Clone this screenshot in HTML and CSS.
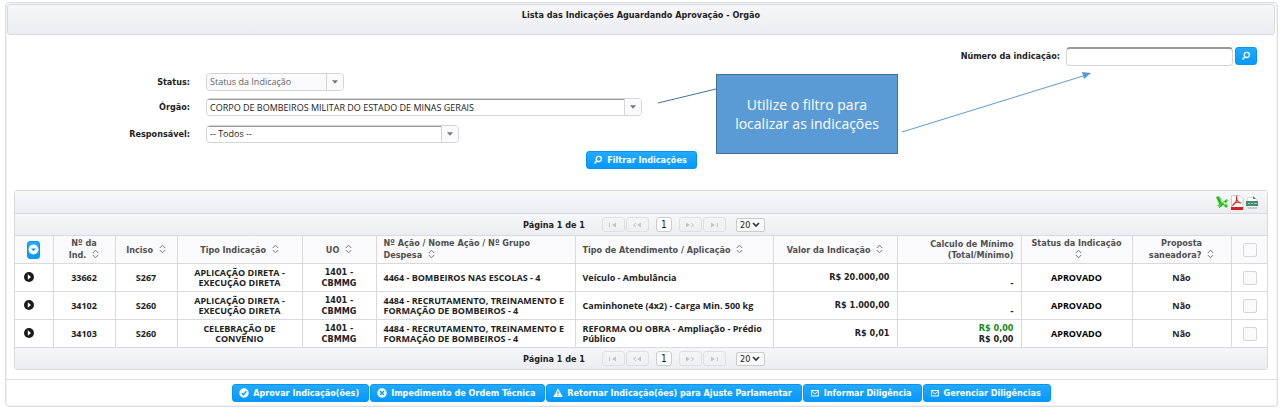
FILE: index.html
```html
<!DOCTYPE html>
<html lang="pt-BR">
<head>
<meta charset="utf-8">
<title>Lista das Indicações Aguardando Aprovação - Orgão</title>
<link rel="stylesheet" href="styles.css">
</head>
<body>
<svg class="sprite" aria-hidden="true">
  <symbol id="i-sort" viewBox="0 0 7 10"><path d="M.8 4 3.500 1.200 6.200 4M.8 6 3.500 8.800 6.200 6" fill="none" stroke="#777"/></symbol>
  <symbol id="i-search" viewBox="0 0 10 10"><circle cx="5.800" cy="3.900" r="2.600" fill="none" stroke="#fff" stroke-width="1.300"/><path d="M4 5.800 1.500 8.500" stroke="#fff" stroke-width="1.600"/></symbol>
  <symbol id="i-down" viewBox="0 0 7 4"><path d="M0 0H7L3.500 4Z" fill="#777"/></symbol>
  <symbol id="i-first" viewBox="0 0 10 6"><path d="M1 1h1v4H1ZM8 .5v5L4 3Z" fill="#c4c4c6"/></symbol>
  <symbol id="i-prev" viewBox="0 0 10 6"><path d="M4 1 1.500 3 4 5" fill="none" stroke="#c4c4c6"/><path d="M9 .5v5L5 3Z" fill="#c4c4c6"/></symbol>
  <symbol id="i-next" viewBox="0 0 10 6"><path d="M6 1 8.500 3 6 5" fill="none" stroke="#c4c4c6"/><path d="M1 .5v5L5 3Z" fill="#c4c4c6"/></symbol>
  <symbol id="i-last" viewBox="0 0 10 6"><path d="M8 1h1v4H8ZM2 .5v5L6 3Z" fill="#c4c4c6"/></symbol>
  <symbol id="i-expand" viewBox="0 0 10 10"><circle cx="5" cy="5" r="5" fill="#1b1b1b"/><path d="M3.800 2.200 7 5 3.800 7.800Z" fill="#fff"/></symbol>
  <symbol id="i-check" viewBox="0 0 10 10"><circle cx="5" cy="5" r="4.700" fill="#fff"/><path d="M2.700 5.200 4.400 6.800 7.400 3.300" fill="none" stroke="#0a9bfa" stroke-width="1.400"/></symbol>
  <symbol id="i-cross" viewBox="0 0 10 10"><circle cx="5" cy="5" r="4.700" fill="#fff"/><path d="M3 3 7 7M7 3 3 7" stroke="#0a9bfa" stroke-width="1.400"/></symbol>
  <symbol id="i-alert" viewBox="0 0 10 10"><path d="M5 .5 9.800 9H.2Z" fill="#fff"/><path d="M5 3.300V6M5 6.900V8" stroke="#0a9bfa" stroke-width="1.200"/></symbol>
  <symbol id="i-mail" viewBox="0 0 10 10"><path d="M1.500 2.500h7v5.500h-7ZM1.500 3 5 6 8.500 3" fill="none" stroke="#fff"/></symbol>
</svg>

<main class="panel">
  <h1 class="panel-title">Lista das Indicações Aguardando Aprovação - Orgão</h1>

  <form class="filters">
    <div class="search">
      <label for="numero">Número da indicação:</label>
      <input id="numero" class="field" type="text">
      <button class="btn btn-icon" type="button" aria-label="Pesquisar"><svg class="ico"><use href="#i-search"/></svg></button>
    </div>
    <div class="grid">
      <label for="status">Status:</label>
      <div class="combo combo-s combo-off"><select id="status" disabled><option>Status da Indicação</option></select><span class="arrow"><svg><use href="#i-down"/></svg></span></div>
      <label for="orgao">Órgão:</label>
      <div class="combo combo-l"><select id="orgao"><option>CORPO DE BOMBEIROS MILITAR DO ESTADO DE MINAS GERAIS</option></select><span class="arrow"><svg><use href="#i-down"/></svg></span></div>
      <label for="resp">Responsável:</label>
      <div class="combo combo-m"><select id="resp"><option>-- Todos --</option></select><span class="arrow"><svg><use href="#i-down"/></svg></span></div>
    </div>
    <div class="submit"><button class="btn" type="button"><svg class="ico"><use href="#i-search"/></svg>Filtrar Indicações</button></div>
  </form>

  <section class="datatable">
    <div class="bar exports">
      <button type="button" aria-label="Exportar planilha"><svg viewBox="0 0 14 15"><path d="M1 2 4 1l2 3 1 4 2-2 3-2 1 2-2 2 2 3-2 2-3-3-2 2-4-1 2-2Z" fill="#3bd32c"/><path d="m2 2 4 7M4 13l7-7M8 8l4 4" stroke="#158c1b" stroke-width=".8"/><path d="m8 8 2-1 1 2-1 1Z" fill="#f3f4f6"/></svg></button>
      <button type="button" aria-label="Exportar PDF"><svg viewBox="0 0 14 15"><path d="M1.500.5H10L13 3.500V14H1.500Z" fill="#fff" stroke="#ccc"/><path d="M1 12h12v3H1Z" fill="#d71e1e"/><path d="M6.500 2c1 3-1 6-3.500 8C4 7.500 8 6.500 11 8 8.500 8 6 4.500 6.500 2Z" fill="none" stroke="#e32020" stroke-width="1.100"/></svg></button>
      <button type="button" aria-label="Exportar CSV"><svg viewBox="0 0 14 15"><path d="M2.500 2.500H9L12 5V13H2.500Z" fill="#fafafa" stroke="#ddd"/><path d="M8 1 11 4H8Z" fill="#777"/><path d="M1 6h12v5H1Z" fill="#458a73"/><path d="M3 8.500h2M6 8.500h2M9 8.500h3" stroke="#9fd0be"/><path d="M3 13h9" stroke="#aaa"/></svg></button>
    </div>
    <nav class="bar pager" aria-label="Paginação superior">
      <span class="pages">Página 1 de 1</span>
      <button type="button" disabled aria-label="Primeira"><svg><use href="#i-first"/></svg></button>
      <button type="button" disabled aria-label="Anterior"><svg><use href="#i-prev"/></svg></button>
      <button type="button" class="current">1</button>
      <button type="button" disabled aria-label="Próxima"><svg><use href="#i-next"/></svg></button>
      <button type="button" disabled aria-label="Última"><svg><use href="#i-last"/></svg></button>
      <span class="rpp"><select aria-label="Linhas por página"><option>20</option></select><svg viewBox="0 0 8 5"><path d="m1 1 3 3 3-3" fill="none" stroke="#333" stroke-width="1.700"/></svg></span>
    </nav>
    <table>
      <colgroup><col class="c38"><col class="c62"><col class="c62"><col class="c125"><col class="c74"><col class="c199"><col class="c198"><col class="c124"><col class="c124"><col class="c111"><col class="c99"><col class="c37"></colgroup>
      <thead>
        <tr>
          <th><button class="btn toggle" type="button" aria-label="Expandir todos"><svg viewBox="0 0 10 10"><circle cx="5" cy="5" r="4.500" fill="#fff"/><path d="M2.800 4H7.200L5 6.500Z" fill="#0a9bfa"/></svg></button></th>
          <th>Nº da<br>Ind. <svg class="sort"><use href="#i-sort"/></svg></th>
          <th>Inciso <svg class="sort"><use href="#i-sort"/></svg></th>
          <th>Tipo Indicação <svg class="sort"><use href="#i-sort"/></svg></th>
          <th>UO <svg class="sort"><use href="#i-sort"/></svg></th>
          <th class="left">Nº Ação / Nome Ação / Nº Grupo<br>Despesa <svg class="sort"><use href="#i-sort"/></svg></th>
          <th class="left">Tipo de Atendimento / Aplicação <svg class="sort"><use href="#i-sort"/></svg></th>
          <th>Valor da Indicação <svg class="sort"><use href="#i-sort"/></svg></th>
          <th class="right">Calculo de Mínimo<br>(Total/Mínimo)</th>
          <th>Status da Indicação<br><svg class="sort"><use href="#i-sort"/></svg></th>
          <th>Proposta<br>saneadora? <svg class="sort"><use href="#i-sort"/></svg></th>
          <th><input type="checkbox" aria-label="Selecionar todos"></th>
        </tr>
      </thead>
      <tbody>
        <tr>
          <td class="left"><button class="expand" type="button" aria-label="Expandir"><svg><use href="#i-expand"/></svg></button></td>
          <td>33662</td><td>S267</td><td>APLICAÇÃO DIRETA -<br>EXECUÇÃO DIRETA</td><td class="big">1401 -<br>CBMMG</td>
          <td class="left">4464 - BOMBEIROS NAS ESCOLAS - 4</td><td class="left">Veículo - Ambulância</td>
          <td class="right big">R$ 20.000,00</td><td class="right big low">-</td><td class="black">APROVADO</td><td>Não</td>
          <td><input type="checkbox" aria-label="Selecionar 33662"></td>
        </tr>
        <tr>
          <td class="left"><button class="expand" type="button" aria-label="Expandir"><svg><use href="#i-expand"/></svg></button></td>
          <td>34102</td><td>S260</td><td>APLICAÇÃO DIRETA -<br>EXECUÇÃO DIRETA</td><td class="big">1401 -<br>CBMMG</td>
          <td class="left">4484 - RECRUTAMENTO, TREINAMENTO E<br>FORMAÇÃO DE BOMBEIROS - 4</td><td class="left">Caminhonete (4x2) - Carga Min. 500 kg</td>
          <td class="right big">R$ 1.000,00</td><td class="right big low">-</td><td class="black">APROVADO</td><td>Não</td>
          <td><input type="checkbox" aria-label="Selecionar 34102"></td>
        </tr>
        <tr>
          <td class="left"><button class="expand" type="button" aria-label="Expandir"><svg><use href="#i-expand"/></svg></button></td>
          <td>34103</td><td>S260</td><td>CELEBRAÇÃO DE<br>CONVÊNIO</td><td class="big">1401 -<br>CBMMG</td>
          <td class="left">4484 - RECRUTAMENTO, TREINAMENTO E<br>FORMAÇÃO DE BOMBEIROS - 4</td><td class="left">REFORMA OU OBRA - Ampliação - Prédio<br>Público</td>
          <td class="right big">R$ 0,01</td><td class="right big"><span class="green">R$ 0,00</span><br>R$ 0,00</td><td class="black">APROVADO</td><td>Não</td>
          <td><input type="checkbox" aria-label="Selecionar 34103"></td>
        </tr>
      </tbody>
    </table>
    <nav class="bar pager" aria-label="Paginação inferior">
      <span class="pages">Página 1 de 1</span>
      <button type="button" disabled aria-label="Primeira"><svg><use href="#i-first"/></svg></button>
      <button type="button" disabled aria-label="Anterior"><svg><use href="#i-prev"/></svg></button>
      <button type="button" class="current">1</button>
      <button type="button" disabled aria-label="Próxima"><svg><use href="#i-next"/></svg></button>
      <button type="button" disabled aria-label="Última"><svg><use href="#i-last"/></svg></button>
      <span class="rpp"><select aria-label="Linhas por página"><option>20</option></select><svg viewBox="0 0 8 5"><path d="m1 1 3 3 3-3" fill="none" stroke="#333" stroke-width="1.700"/></svg></span>
    </nav>
  </section>

  <footer class="actions">
    <button class="btn" type="button"><svg class="ico"><use href="#i-check"/></svg>Aprovar Indicação(ões)</button>
    <button class="btn" type="button"><svg class="ico"><use href="#i-cross"/></svg>Impedimento de Ordem Técnica</button>
    <button class="btn" type="button"><svg class="ico"><use href="#i-alert"/></svg>Retornar Indicação(ões) para Ajuste Parlamentar</button>
    <button class="btn" type="button"><svg class="ico"><use href="#i-mail"/></svg>Informar Diligência</button>
    <button class="btn" type="button"><svg class="ico"><use href="#i-mail"/></svg>Gerenciar Diligências</button>
  </footer>
</main>

<svg class="pointers" width="440" height="70" viewBox="0 0 440 70" aria-hidden="true">
  <path d="M2 37 60 23" stroke="#41719c"/>
  <path d="M246 66 427 10" stroke="#5b9bd5"/>
  <path d="M435 7 428 13 426 6Z" fill="#5b9bd5"/>
</svg>
<aside class="callout">Utilize o filtro para<br>localizar as indicações</aside>
</body>
</html>
```
FILE: styles.css
```css
* { box-sizing: border-box; }
body {
  position: relative;
  margin: 0;
  padding: 2px 2px 0 5px;
  background: #fff;
  color: #222;
  font: 9px/12px "DejaVu Sans Condensed", "DejaVu Sans", sans-serif;
}
.sprite { display: none; }
button, input, select { margin: 0; padding: 0; font: inherit; color: inherit; }
select { appearance: none; border: 0; background: transparent; outline: 0; }
svg { display: block; }

.panel { border: 1px solid #dddee0; border-radius: 4px; padding-top: 1px; box-shadow: inset 0 0 0 1px #f3f3f3; }
.panel-title {
  height: 31px;
  margin: 0 2px 0 1px;
  padding-top: 4px;
  border: 1px solid #d9dadd;
  border-radius: 3px;
  background: linear-gradient(#f6f7f9, #ebedf0);
  font-size: 9px;
  line-height: 12px;
  text-align: center;
}

.filters { padding: 11px 20px 0 0; }
.filters label { font-weight: bold; text-align: right; }
.search { display: flex; align-items: center; justify-content: flex-end; height: 20px; }
.search label { margin-right: 6px; }
.field {
  width: 167px;
  height: 19px;
  margin-right: 2px;
  border: 1px solid #d5d5d5;
  border-top: 2px solid #999;
  border-radius: 4px;
}
.grid { display: grid; grid-template-columns: 184px 1fr; column-gap: 16px; margin-top: 5px; align-items: center; grid-template-rows: 22px 28px 25px; }
.combo {
  display: flex;
  height: 18px;
  border: 1px solid #d5d5d5;
  border-radius: 4px;
  overflow: hidden;
}
.combo select { flex: 1; min-width: 0; padding-left: 3px; border-top: 1px solid #999; font-family: "Open Sans", sans-serif; }
.combo .arrow { display: grid; place-items: center; width: 17px; border-left: 1px solid #d5d5d5; background: #fafafc; }
.arrow svg { width: 6px; height: 4px; }
.combo-s { width: 138px; }
.combo-m { width: 253px; }
.combo-l { width: 436px; }
.combo-off { background: #fafafc; color: #666; }
.combo-off select { border-top: 0; opacity: 1; }
.submit { display: flex; justify-content: center; margin: 5px 0 0 20px; }

.btn {
  display: inline-flex;
  align-items: center;
  justify-content: center;
  gap: 4px;
  height: 18px;
  padding: 0 9px 0 6px;
  border: 1px solid #0795f2;
  border-radius: 3px;
  background: linear-gradient(#24a9ff, #0699fb);
  color: #fff;
  font-weight: bold;
}
.ico { width: 10px; height: 10px; }
.btn-icon { width: 22px; padding: 0; }
.toggle { width: 13px; padding: 0; }
.toggle svg { width: 11px; height: 11px; flex: none; }

.datatable { margin: 21px 9px 9px 8px; border: 1px solid #d9dadd; border-radius: 3px; overflow: hidden; }
.bar { display: flex; align-items: center; background: linear-gradient(#f6f7f9, #ebedf0); }
.exports { height: 23px; justify-content: flex-end; gap: 1px; padding-right: 8px; border-bottom: 1px solid #d9dadd; }
.exports button { width: 14px; height: 15px; border: 0; background: none; }
.pager { height: 21px; justify-content: center; padding-left: 6px; }
.pages { margin-right: 17px; font-weight: bold; }
.pager button { display: grid; place-items: center; width: 23px; height: 15px; margin-right: 1px; border: 1px solid #dedfe2; border-radius: 3px; background: transparent; }
.pager button svg { width: 10px; height: 6px; }
.pager .current { width: 16px; margin: 0 7px 0 6px; border-color: #ccc; background: #fff; font-size: 10px; }
.rpp { display: flex; align-items: center; width: 29px; height: 14px; margin-left: 9px; padding: 0 4px 0 3px; border: 1px solid #ccc; border-radius: 2px; background: #f8f8f8; }
.rpp select { flex: 1; min-width: 0; }
.rpp svg { width: 8px; height: 5px; flex: none; }

table { width: 100%; table-layout: fixed; border-collapse: collapse; }
th, td { height: 28px; padding: 0 7px; border: 1px solid #d9dadd; font-weight: bold; line-height: 11px; text-align: center; white-space: nowrap; }
td { font-family: "Open Sans", sans-serif; line-height: 10px; }
tr > :first-child { border-left: 0; }
tr > :last-child { border-right: 0; }
th { background: #fafafc; color: #505050; }
.left { text-align: left; }
.right { text-align: right; }
.big { font-family: "DejaVu Sans Condensed", "DejaVu Sans", sans-serif; line-height: 11px; }
.low { padding-top: 11px; }
.black { color: #000; }
.green { color: #178a17; }
.sort { display: inline-block; width: 7px; height: 10px; margin-left: 3px; vertical-align: -1px; }
.expand { width: 10px; height: 10px; margin-left: 2px; border: 0; background: none; }
.expand svg { width: 10px; height: 10px; }
input[type="checkbox"] { display: inline-block; appearance: none; width: 14px; height: 14px; border: 1px solid #d5d5d5; border-radius: 2px; background: #fafafc; vertical-align: middle; }
.c38 { width: 38px; } .c62 { width: 62px; } .c125 { width: 125px; } .c74 { width: 74px; }
.c199 { width: 199px; } .c198 { width: 198px; } .c124 { width: 124px; } .c111 { width: 111px; }
.c99 { width: 99px; } .c37 { width: 37px; }

.actions { display: flex; justify-content: center; gap: 1px; padding: 4px 0; border-top: 1px solid #dddee0; }

.callout {
  position: absolute;
  left: 716px;
  top: 74px;
  display: grid;
  place-items: center;
  width: 182px;
  height: 80px;
  border: 1px solid #41719c;
  background: #5b9bd5;
  color: #fff;
  font: 14px/19px "Open Sans", sans-serif;
  text-align: center;
}
.pointers { position: absolute; left: 656px; top: 66px; pointer-events: none; }
```
